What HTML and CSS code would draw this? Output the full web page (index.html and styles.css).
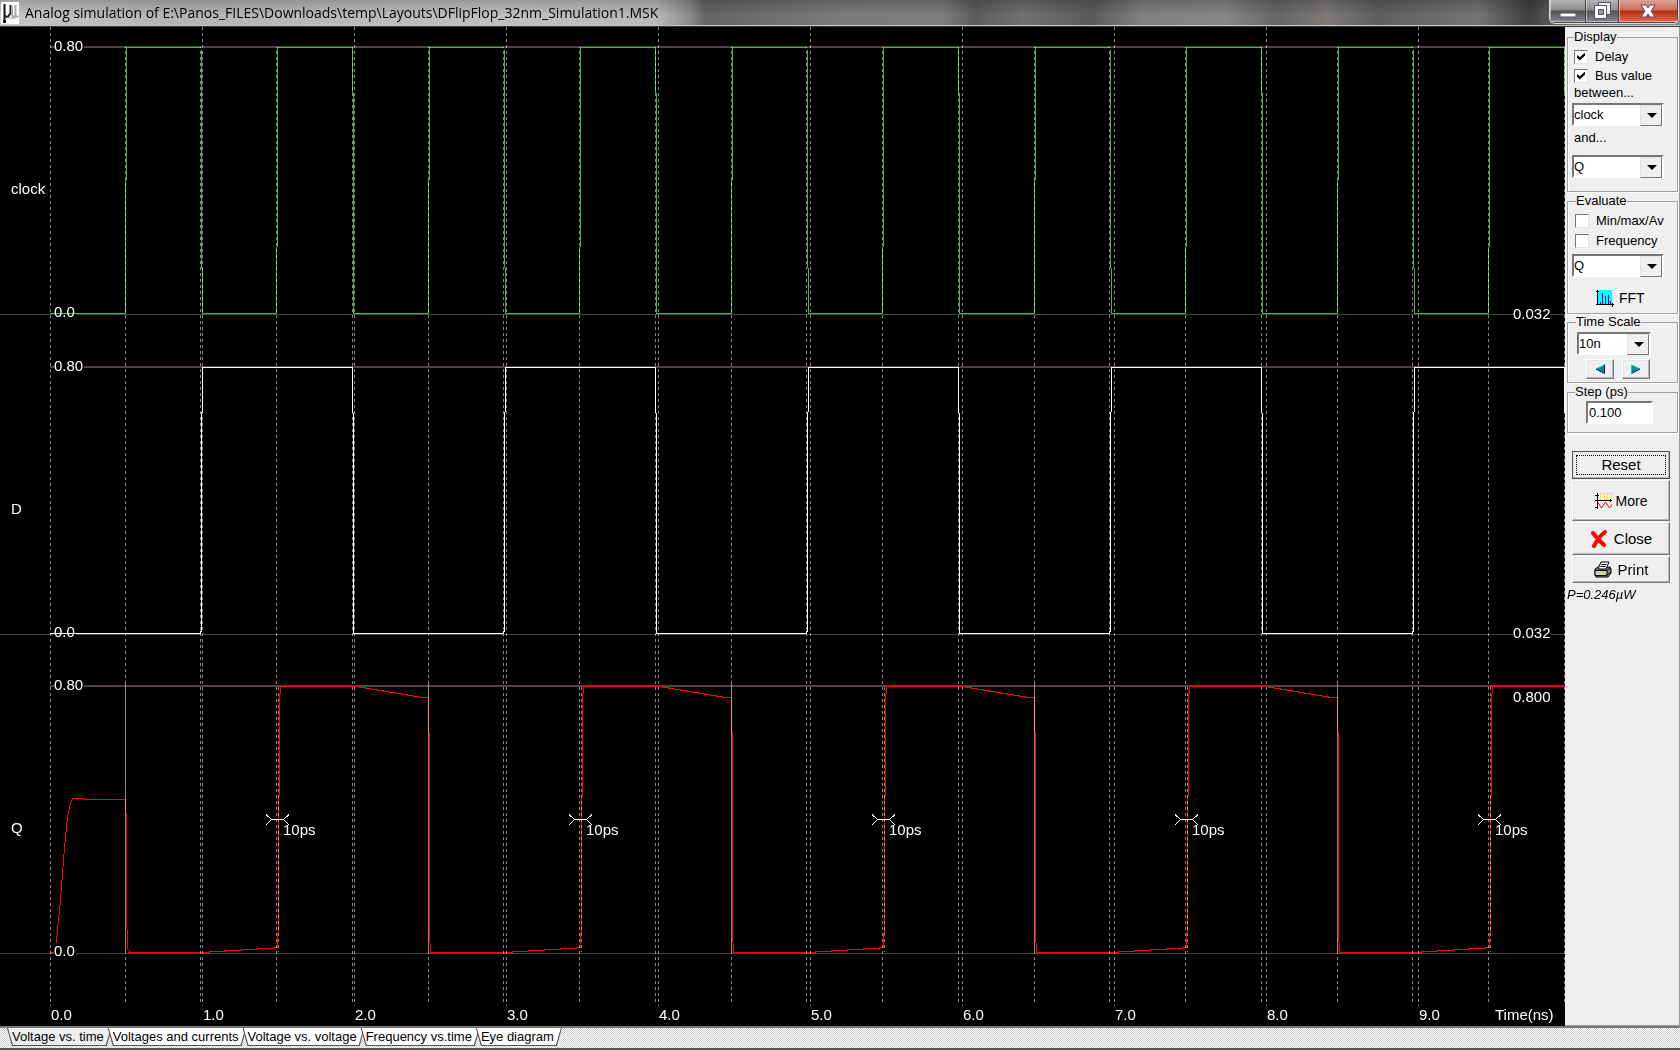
FILE: index.html
```
<!DOCTYPE html>
<html lang="en">
<head>
<meta charset="utf-8">
<title>Analog simulation</title>
<link rel="stylesheet" href="styles.css">
</head>
<body>
<div class="window">
  <header class="titlebar">
    <svg class="app-icon" viewBox="0 0 18 22" aria-hidden="true">
      <rect width="18" height="22" fill="#fff"/>
      <path d="M3.500 2v18" stroke="#111" stroke-width="2"/>
      <path d="M2 19.500h3" stroke="#111" stroke-width="3"/>
      <path d="M3.500 13q2 3 4 1l2-3V3" stroke="#222" stroke-width="2" fill="none"/>
      <path d="M11 4v9q1 3 3 1M14.500 3v11l3 1" stroke="#aaa" stroke-width="2" fill="none"/>
      <path d="M7 16h8" stroke="#7fae7f"/>
    </svg>
    <h1 class="title">Analog simulation of E:\Panos_FILES\Downloads\temp\Layouts\DFlipFlop_32nm_Simulation1.MSK</h1>
    <div class="caption-buttons">
      <button class="cap cap-min" aria-label="Minimize"><svg viewBox="0 0 18 18"><rect x="1" y="11" width="16" height="4" fill="#fff" stroke="#50506a"/></svg></button>
      <button class="cap cap-max" aria-label="Restore"><svg viewBox="0 0 18 18"><path d="M5.500 .5h12v12h-12z" fill="#eee" stroke="#50506a"/><path d="M1.500 3.500h12v13h-12z" fill="#fff" stroke="#50506a"/><path d="M5.500 7.500h5v5h-5z" fill="#999" stroke="#50506a"/></svg></button>
      <button class="cap cap-close" aria-label="Close window"><svg viewBox="0 0 18 18"><path d="M2 3h5l2 3 2-3h5l-4 6 4 6h-5l-2-3-2 3H2l4-6z" fill="#fff" stroke="#50506a"/></svg></button>
    </div>
  </header>

  <main class="workspace">
    <svg class="plot" viewBox="0 27 1565 999" role="img" aria-label="Voltage versus time for clock, D and Q">
      <g class="levels">
        <path class="high" d="M50 47H1565M50 367H1565M50 686H1565"/>
        <path class="zero" d="M0 314.500H1565M0 634.500H1565M0 953.500H1565"/>
      </g>

      <g class="trace clock">
        <path d="M50 313.500H126"/>
        <path id="clock" d="M125.500 314V180M126.500 180V47M125 47.500H201M201.500 50V268M202.500 268V314M202 313.500H277M276.500 314V247M277.500 247V47M277 47.500H353M352.500 47V93M353.500 93V314M353 313.500H429"/>
        <use href="#clock" x="303"/><use href="#clock" x="606"/><use href="#clock" x="909"/><use href="#clock" x="1212"/>
      </g>

      <g class="trace data">
        <path d="M50 633.500H201"/>
        <path id="data" d="M200.500 634V631M201.500 632V412M202.500 412V367M202 367.500H353M352.500 367V413M353.500 413V634M353 633.500H504"/>
        <use href="#data" x="303"/><use href="#data" x="606"/><use href="#data" x="909"/><use href="#data" x="1212"/>
      </g>

      <g class="trace out">
        <path d="M50 952.500H55.500L56.500 940L60.500 900L64.500 847L67.500 817L70.500 803L72.500 799L75.500 798.500H84.500V799.500H126M125.500 799V814M126.500 814V929M127.500 929V948L130.500 952.500"/>
        <path id="out" d="M128 952.500H209.500V951.500H225.500V950.500H241.500V949.500H257.500V948.500H273.500V947.500H278M277.500 948V933M278.500 933V796M279.500 796V694M280.500 694V686M280 686.500H359.500V687.500H365.500V688.500H371.500V689.500H377.500V690.500H383.500V691.500H389.500V692.500H395.500V693.500H401.500V694.500H407.500V695.500H413.500V696.500H419.500V697.500H428.500V732M429.500 732V943M430.500 943V953"/>
        <use href="#out" x="303"/><use href="#out" x="606"/><use href="#out" x="909"/><use href="#out" x="1212"/>
      </g>

      <g class="grid">
        <path class="dash" d="M50.500 27V1006M202.500 27V1006M354.500 27V1006M506.500 27V1006M658.500 27V1006M810.500 27V1006M962.500 27V1006M1114.500 27V1006M1266.500 27V1006M1418.500 27V1006"/>
        <path class="dash edge" d="M125.500 47V1004M200.500 47V1004M276.500 47V1004M352.500 47V1004M428.500 47V1004M503.500 47V1004M579.500 47V1004M655.500 47V1004M731.500 47V1004M806.500 47V1004M882.500 47V1004M958.500 47V1004M1034.500 47V1004M1109.500 47V1004M1185.500 47V1004M1261.500 47V1004M1337.500 47V1004M1412.500 47V1004M1488.500 47V1004M1564.500 47V1004"/>
        <path class="dash" d="M278.500 687V952M581.500 687V952M884.500 687V952M1187.500 687V952M1490.500 687V952"/>
        <path d="M125.500 684V952M428.500 684V952M731.500 684V952M1034.500 684V952M1337.500 684V952"/>
      </g>

      <g class="marks">
        <path id="mark" d="M271 819.500H284M266 814.500L271.500 819.500L266 825M289 814.500L283.500 819.500L289 825"/>
        <use href="#mark" x="303"/><use href="#mark" x="606"/><use href="#mark" x="909"/><use href="#mark" x="1212"/>
      </g>

      <g class="plates">
        <path d="M54 38h30v16h-30zM54 304h22v16h-22zM54 358h30v16h-30zM54 624h22v16h-22zM54 677h30v16h-30zM54 943h22v16h-22zM1513 307h38v14h-38zM1513 627h38v14h-38z"/>
      </g>
      <g class="trace clock"><path d="M50 313.500H76"/></g>
      <g class="trace data"><path d="M50 633.500H76"/></g>

      <g class="labels">
        <text x="11" y="194">clock</text><text x="11" y="514">D</text><text x="11" y="833">Q</text>
        <text x="54" y="51">0.80</text><text x="54" y="317">0.0</text>
        <text x="54" y="371">0.80</text><text x="54" y="637">0.0</text>
        <text x="54" y="690">0.80</text><text x="54" y="956">0.0</text>
        <text x="1513" y="319">0.032</text><text x="1513" y="638">0.032</text><text x="1513" y="702">0.800</text>
        <text x="283" y="835">10ps</text><text x="586" y="835">10ps</text><text x="889" y="835">10ps</text><text x="1192" y="835">10ps</text><text x="1495" y="835">10ps</text>
        <text x="51" y="1020">0.0</text><text x="203" y="1020">1.0</text><text x="355" y="1020">2.0</text><text x="507" y="1020">3.0</text><text x="659" y="1020">4.0</text><text x="811" y="1020">5.0</text><text x="963" y="1020">6.0</text><text x="1115" y="1020">7.0</text><text x="1267" y="1020">8.0</text><text x="1419" y="1020">9.0</text>
        <text x="1495" y="1020">Time(ns)</text>
      </g>
    </svg>

    <aside class="panel">
      <fieldset class="group display">
        <legend>Display</legend>
        <label class="check"><input type="checkbox" checked>Delay</label>
        <label class="check"><input type="checkbox" checked>Bus value</label>
        <label class="caption" for="from">between...</label>
        <span class="combo"><select id="from"><option>clock</option><option>D</option><option>Q</option></select></span>
        <label class="caption and" for="to">and...</label>
        <span class="combo"><select id="to"><option>Q</option><option>D</option><option>clock</option></select></span>
      </fieldset>

      <fieldset class="group evaluate">
        <legend>Evaluate</legend>
        <label class="check"><input type="checkbox">Min/max/Av</label>
        <label class="check"><input type="checkbox">Frequency</label>
        <span class="combo"><select aria-label="Signal to evaluate"><option>Q</option><option>D</option><option>clock</option></select></span>
        <button class="fft">
          <svg class="icon" viewBox="0 0 18 18" aria-hidden="true"><rect x="2" y="1" width="14" height="15" fill="#0ff"/><path d="M4.500 13v3M6.500 4v12M9.500 7v9M12.500 6v10M14.500 12v4" stroke="#0000c0"/><path d="M1.500 1v15M0 15.500h18M0 2.500h3M16.500 14v4" stroke="#000" fill="none"/></svg>
          FFT
        </button>
      </fieldset>

      <fieldset class="group scale">
        <legend>Time Scale</legend>
        <span class="combo"><select aria-label="Time scale"><option>10n</option><option>5n</option></select></span>
        <div class="steps">
          <button class="bevel" aria-label="Earlier"><svg viewBox="0 0 10 10"><path d="M9.500 1v8L1 5z" fill="#008b8b"/><path d="M1 5l8.500-4" stroke="#0cc"/><path d="M9.500 .5v9L1 5" stroke="#00009c" fill="none"/></svg></button>
          <button class="bevel" aria-label="Later"><svg viewBox="0 0 10 10"><path d="M.5 1v8L9 5z" fill="#008b8b"/><path d="M.5 9V1L9 5" stroke="#0cc" fill="none"/><path d="M.5 9.500L9 5" stroke="#00009c"/></svg></button>
        </div>
      </fieldset>

      <fieldset class="group step">
        <legend>Step (ps)</legend>
        <input class="field" type="text" value="0.100" aria-label="Step (ps)">
      </fieldset>

      <div class="actions">
        <button class="bevel reset"><span>Reset</span></button>
        <button class="bevel more">
          <svg class="icon" viewBox="0 0 18 18" aria-hidden="true"><path d="M3 7.500h2.500v-6h4v6h3v-6h4v6" stroke="#fe0" fill="none"/><path d="M3 10.500l3 5h1l3-5h1l3 5h1l2-3" stroke="#e00" fill="none"/><path d="M2.500 1v16M0 8.500h17M0 3.500h4M0 15.500h3M15.500 7v3" stroke="#000" fill="none"/></svg>
          More
        </button>
        <button class="bevel close">
          <svg class="icon" viewBox="0 0 18 18" aria-hidden="true"><path d="M3 3q4 5 5 6t6 6M15 2Q10 6 8 9t-4 7" stroke="red" stroke-width="4" stroke-linecap="round" fill="none"/></svg>
          Close
        </button>
        <button class="bevel print">
          <svg class="icon" viewBox="0 0 18 18" aria-hidden="true"><path d="M1 8l3-2h12l1 2v4l-3 4H2l-1-2z" fill="#888" stroke="#000"/><path d="M4 8l3-7h8l-3 7z" fill="#fff" stroke="#000"/><path d="M7.500 3.500h5M6.500 5.500h5" stroke="#000"/><path d="M1 9.500h12v5H1z" fill="#ccc" stroke="#000"/><path d="M13 9l4-2M13 14l4-3" stroke="#000"/><path d="M7 13h4" stroke="#ee0" stroke-width="2"/></svg>
          Print
        </button>
      </div>
      <output class="power">P=0.246µW</output>
    </aside>
  </main>

  <nav class="tabs" role="tablist">
    <button class="tab active" role="tab" aria-selected="true"><span>Voltage vs. time</span></button>
    <button class="tab" role="tab"><span>Voltages and currents</span></button>
    <button class="tab" role="tab"><span>Voltage vs. voltage</span></button>
    <button class="tab" role="tab"><span>Frequency vs.time</span></button>
    <button class="tab" role="tab"><span>Eye diagram</span></button>
  </nav>
</div>
</body>
</html>
```
FILE: styles.css
```
* { box-sizing: border-box; }

body {
  margin: 0;
  background: #000;
  color: #000;
  font: 13px/16px "Liberation Sans", Arial, sans-serif;
}

button, input, select { font: inherit; color: inherit; margin: 0; }
button { padding: 0; }

.window { display: flex; flex-direction: column; min-height: 100vh; }

/* Title bar */
.titlebar {
  display: flex;
  align-items: center;
  height: 27px;
  padding: 0 1px 1px;
  border-bottom: 1px solid #3a3a3a;
  box-shadow: inset 0 -1px #c4c4c4;
  background:
    linear-gradient(180deg, rgba(0, 0, 0, .2), rgba(0, 0, 0, 0) 60%),
    linear-gradient(90deg, #c8c8c8 0, #b4b4b4 10%, #c0c0c0 30%, #bababa 39%, #8d8d8d 41%, #646565 42%, #7a7b7b 50%, #7e7e7e 56%, #5c5d5d 58%, #707171 61%, #5a5b5b 65%, #808181 68%, #858686 73%, #666 76%, #7d7a78 79%, #5e5f5f 82%, #747575 88%, #404040 91%, #777 94%, #8a8a8a 100%);
}
.app-icon { width: 18px; height: 22px; flex: none; }
.title {
  flex: 1;
  margin: 0 0 0 6px;
  font: 14px/22px "Open Sans", "Noto Sans", sans-serif;
  white-space: nowrap;
  overflow: hidden;
}
.caption-buttons {
  display: flex;
  align-self: flex-start;
  height: 24px;
  border: 1px solid #ddd;
  border-top: 0;
  border-radius: 0 0 6px 6px;
  overflow: hidden;
}
.cap {
  display: flex;
  align-items: center;
  justify-content: center;
  width: 33px;
  border: 1px solid #444;
  border-width: 0 1px 1px 0;
  background: linear-gradient(#b5b5b5 0, #8c8c8c 45%, #555 50%, #84848c);
  box-shadow: inset 1px -1px rgba(255, 255, 255, .45);
}
.cap svg { width: 18px; height: 18px; }
.cap-min { width: 36px; }
.cap-close { width: 59px; background: linear-gradient(#d9a398 0, #cf6a57 45%, #b52c12 50%, #dd6a48); }

/* Plot */
.workspace { display: flex; align-items: stretch; }
.plot { display: block; flex: 1; min-width: 0; background: #000; }
.plot path { fill: none; shape-rendering: crispEdges; }
.high { stroke: #544343; stroke-width: 2; }
.zero { stroke: #3c4a3c; }
.clock { stroke: #45b545; }
.data { stroke: #fff; }
.out { stroke: #f00; }
.grid { stroke: #888; mix-blend-mode: screen; }
.dash { stroke-dasharray: 3 3; }
.edge { stroke-dashoffset: 2; }
.marks { stroke: #fff; }
.plot .plates path { fill: #000; }
.labels { fill: #fff; font-size: 15px; }

/* Side panel */
.panel {
  display: flex;
  flex-direction: column;
  width: 115px;
  flex: none;
  padding: 2px 1px 0 2px;
  border-right: 1px solid #999;
  border-bottom: 1px solid #999;
  background: #efefef;
}
.group {
  display: flex;
  flex-direction: column;
  align-items: flex-start;
  min-width: 0;
  margin: 0;
  padding: 0 0 0 4px;
  border: 1px solid #a0a0a0;
  box-shadow: 1px 1px #fff, inset 1px 0 #fff;
}
.group legend { height: 16px; margin-left: 2px; padding: 0; line-height: 16px; }
.display { height: 163px; padding-top: 2px; }
.evaluate { height: 121px; margin-top: 1px; padding-top: 2px; }
.evaluate legend { margin-left: 4px; }
.scale { height: 69px; padding: 2px 0 0 9px; }
.scale legend { margin-left: -1px; }
.step { height: 49px; margin-top: 1px; padding: 1px 0 0 18px; }
.step legend { margin-left: -11px; }

.check { display: flex; align-items: center; gap: 7px; height: 19px; padding-left: 2px; white-space: nowrap; }
.evaluate .check { height: 20px; padding-left: 3px; }
.check input {
  appearance: none;
  display: grid;
  place-items: center;
  width: 14px;
  height: 14px;
  border: 1px solid;
  border-color: #777 #e3e3e3 #e3e3e3 #777;
  background: #fff;
}
.check input:checked::before {
  content: "";
  width: 8px;
  height: 8px;
  background: #000;
  clip-path: polygon(0 30%, 35% 60%, 100% 0, 100% 38%, 35% 100%, 0 65%);
}
.caption { padding-left: 2px; }
.and { margin-top: 4px; margin-bottom: 9px; }

.combo {
  position: relative;
  width: 92px;
  height: 23px;
  border: 2px solid;
  border-color: #777 #fff #fff #777;
  background: #fff;
}
.caption + .combo { margin-top: 2px; }
.caption.and + .combo { margin-top: 0; }
.evaluate .combo { margin-top: 3px; }
.scale .combo { width: 74px; }
.combo select {
  appearance: none;
  position: relative;
  display: block;
  width: 100%;
  height: 19px;
  padding: 0 20px 0 0;
  border: 0;
  background: none;
  line-height: 18px;
}
.combo::before {
  content: "";
  position: absolute;
  top: 0;
  right: 0;
  width: 20px;
  height: 19px;
  border: 1px solid;
  border-color: #e3e3e3 #777 #777 #e3e3e3;
  background: #efefef;
  pointer-events: none;
}
.combo::after {
  content: "";
  position: absolute;
  top: 8px;
  right: 5px;
  border: 5px solid transparent;
  border-top-color: #000;
  border-bottom: 0;
  pointer-events: none;
}

.fft {
  display: flex;
  align-items: center;
  gap: 5px;
  height: 30px;
  margin: 6px 0 0 24px;
  border: 0;
  background: none;
  font-size: 14px;
}
.icon { width: 18px; height: 18px; flex: none; }

.bevel {
  display: flex;
  align-items: center;
  justify-content: center;
  gap: 3px;
  border: 1px solid;
  border-color: #fff #777 #777 #fff;
  background: #efefef;
  box-shadow: inset -1px -1px #b5b5b5, inset 1px 1px #e3e3e3;
}
.steps { display: flex; gap: 8px; margin: 4px 0 0 9px; }
.steps .bevel { width: 28px; height: 20px; }
.steps svg { width: 10px; height: 10px; }

.field {
  width: 67px;
  height: 23px;
  padding: 0 1px;
  border: 2px solid;
  border-color: #777 #fff #fff #777;
  background: #fff;
}

.actions { display: flex; flex-direction: column; gap: 1px; margin: 18px 8px 0 5px; font-size: 15px; }
.reset { height: 28px; padding: 3px; border-color: #555; }
.reset span { flex: 1; line-height: 18px; border: 1px dotted #000; }
.more { height: 41px; font-size: 14px; }
.close { height: 33px; gap: 6px; }
.print { height: 27px; gap: 6px; }
.power { margin-top: 4px; font-style: italic; }

/* Sheet tabs */
.tabs {
  display: flex;
  flex: 1;
  padding-left: 7px;
  border-top: 2px solid #777;
  border-bottom: 2px solid #555;
  background: repeating-conic-gradient(#fff 0 25%, #ccc 0 50%) 0 0 / 2px 2px;
}
.tab {
  height: 18px;
  padding: 0 1px 1px;
  margin-right: -4px;
  border: 0;
  background: #555;
  clip-path: polygon(0 0, 100% 0, calc(100% - 5px) 100%, 5px 100%);
}
.tab span {
  display: block;
  padding: 0 7px 0 4px;
  line-height: 17px;
  background: #fff;
  clip-path: polygon(0 0, 100% 0, calc(100% - 5px) 100%, 5px 100%);
}
.tab.active span { background: #efefef; }
```
